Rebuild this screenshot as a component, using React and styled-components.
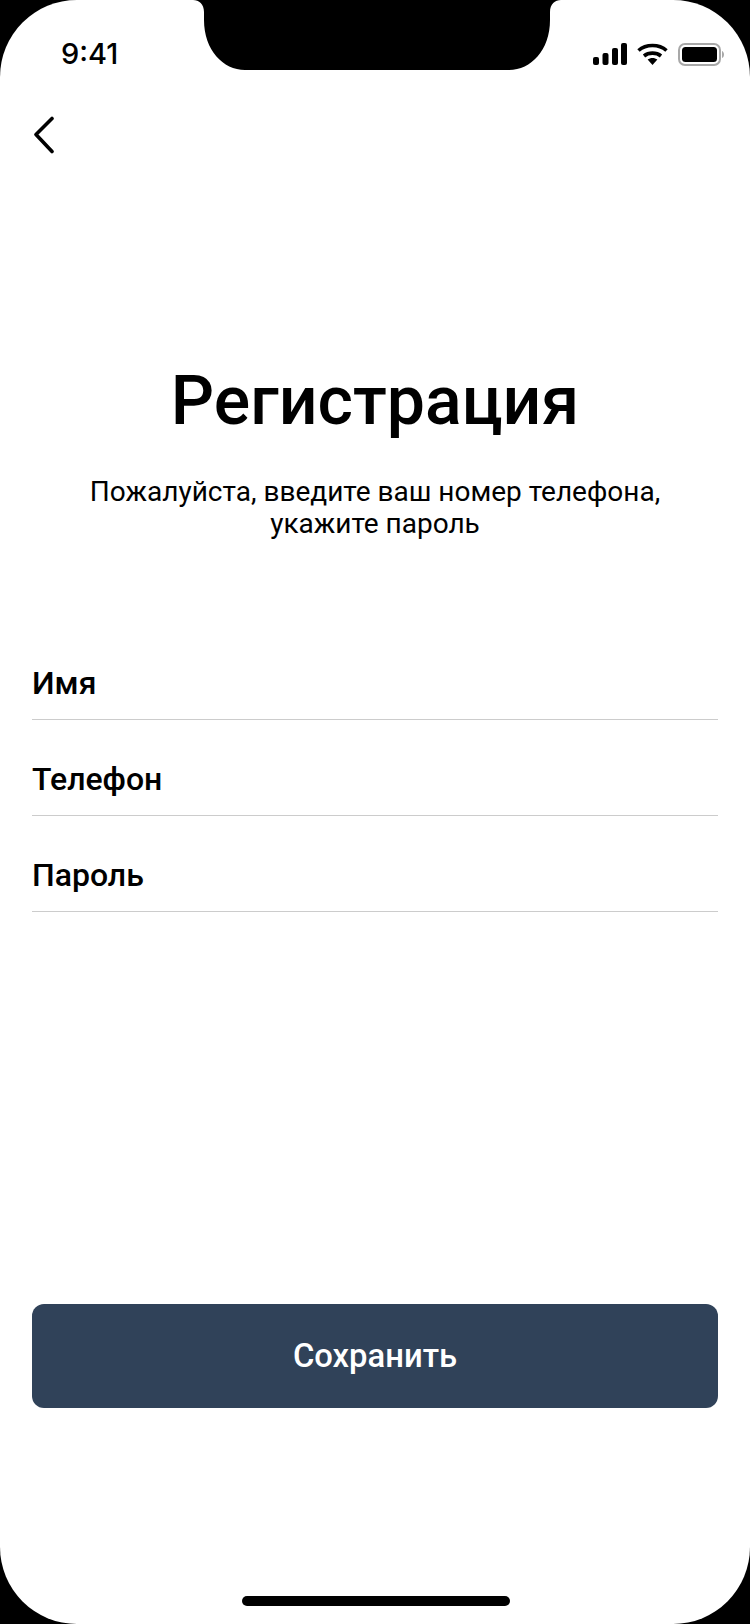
import React from "react";
import styled, { createGlobalStyle } from "styled-components";

const GlobalStyle = createGlobalStyle`
  html, body {
    margin: 0;
    padding: 0;
    background: #000;
  }
  * {
    box-sizing: border-box;
  }
`;

const fields = ["Имя", "Телефон", "Пароль"];

const App = () => {
  return (
    <>
      <GlobalStyle />
      <Screen>
        <Notch viewBox="0 0 368 70" aria-hidden="true">
          <path d="M0 0C6 0 11 4 11 12V20C11 50 30 70 52 70H316C338 70 357 50 357 20V12C357 4 362 0 368 0Z" fill="#000" />
        </Notch>
        <StatusBar>
          <Time>9:41</Time>
          <StatusIcons>
            <svg width="34" height="22" viewBox="0 0 34 22" aria-hidden="true">
              <rect x="0" y="14" width="6" height="8" rx="2" fill="#000" />
              <rect x="9.5" y="10" width="6" height="12" rx="2" fill="#000" />
              <rect x="19" y="5" width="6" height="17" rx="2" fill="#000" />
              <rect x="28" y="0" width="6" height="22" rx="2" fill="#000" />
            </svg>
            <svg width="31" height="22" viewBox="0 0 31 22" aria-hidden="true">
              <path d="M1.5 7.5C9 .8 22 .8 29.5 7.5" fill="none" stroke="#000" strokeWidth="3.6" />
              <path d="M7 13C11.6 9.2 19.4 9.2 24 13" fill="none" stroke="#000" strokeWidth="3.6" />
              <path d="M10.6 16.6C13.4 14.4 17.6 14.4 20.4 16.6L15.5 22Z" fill="#000" />
            </svg>
            <svg width="46" height="23" viewBox="0 0 46 23" aria-hidden="true">
              <rect x="1" y="1" width="41" height="21" rx="6" fill="none" stroke="#a8a8a8" strokeWidth="2" />
              <rect x="4" y="4" width="35" height="15" rx="3.5" fill="#000" />
              <path d="M44 8C45.4 8.5 46 10 46 11.5C46 13 45.4 14.5 44 15Z" fill="#a8a8a8" />
            </svg>
          </StatusIcons>
        </StatusBar>
        <BackButton aria-label="Назад">
          <svg width="20" height="38" viewBox="0 0 20 38" aria-hidden="true">
            <path d="M18 2.5L2 18.5L18 35.5" fill="none" stroke="#000" strokeWidth="3.6" strokeLinecap="round" strokeLinejoin="round" />
          </svg>
        </BackButton>
        <Heading>
          <Title>Регистрация</Title>
          <Subtitle>
            Пожалуйста, введите ваш номер телефона,
            <br />
            укажите пароль
          </Subtitle>
        </Heading>
        <Form>
          {fields.map((label) => (
            <Field key={label}>{label}</Field>
          ))}
        </Form>
        <SaveButton>Сохранить</SaveButton>
        <HomeIndicator />
      </Screen>
    </>
  );
};

const Screen = styled.div`
  position: relative;
  display: flex;
  flex-direction: column;
  width: 750px;
  height: 1624px;
  padding: 0 32px;
  overflow: hidden;
  background: #fff;
  border-radius: 77px;
  font-family: Roboto, "Liberation Sans", sans-serif;
  color: #000;
`;

const Notch = styled.svg`
  position: absolute;
  top: 0;
  left: 193px;
  width: 368px;
  height: 70px;
`;

const StatusBar = styled.div`
  display: flex;
  align-items: center;
  justify-content: space-between;
  height: 22px;
  margin-top: 43px;
  margin-right: -6px;
  padding-left: 29px;
`;

const Time = styled.span`
  font-family: Inter, sans-serif;
  font-size: 29px;
  font-weight: 500;
  line-height: 22px;
`;

const StatusIcons = styled.div`
  display: flex;
  align-items: center;
  gap: 10px;
`;

const BackButton = styled.button`
  display: block;
  align-self: flex-start;
  width: 20px;
  height: 38px;
  margin: 51px 0 0 2px;
  padding: 0;
  border: 0;
  background: none;
`;

const Heading = styled.div`
  display: flex;
  flex-direction: column;
  align-items: center;
  margin-top: 207px;
  text-align: center;
`;

const Title = styled.h1`
  margin: 0;
  font-size: 68px;
  font-weight: 500;
  line-height: 80px;
`;

const Subtitle = styled.p`
  margin: 35px 0 0;
  font-size: 28px;
  font-weight: 400;
  line-height: 32px;
`;

const Form = styled.div`
  display: flex;
  flex-direction: column;
  margin-top: 84px;
`;

const Field = styled.div`
  display: flex;
  align-items: center;
  height: 96px;
  padding-top: 22px;
  border-bottom: 1px solid #cccccc;
  font-size: 32px;
  font-weight: 500;
`;

const SaveButton = styled.button`
  height: 104px;
  margin-top: auto;
  margin-bottom: 216px;
  border: 0;
  border-radius: 12px;
  background: #304259;
  color: #fff;
  font-family: inherit;
  font-size: 32.8px;
  font-weight: 500;
`;

const HomeIndicator = styled.div`
  position: absolute;
  left: 242px;
  bottom: 18px;
  width: 268px;
  height: 10px;
  border-radius: 5px;
  background: #000;
`;

export default App;
